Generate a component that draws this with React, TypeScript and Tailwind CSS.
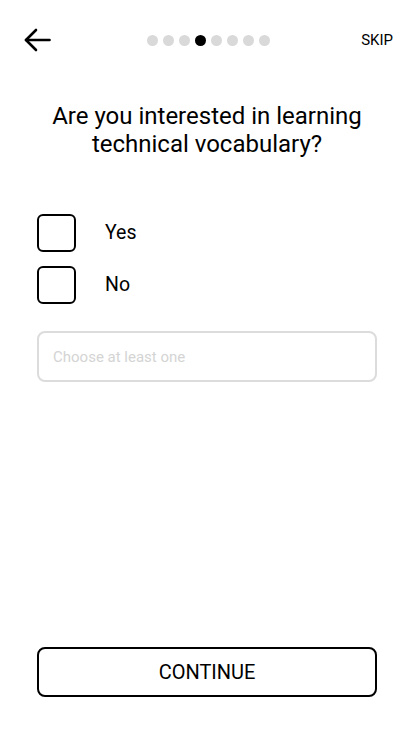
import { useState } from "react";

const Checkbox = ({ label }: { label: string }) => {
  const [checked, setChecked] = useState(false);
  return (
    <label className="flex items-center cursor-pointer">
      <button
        type="button"
        onClick={() => setChecked(!checked)}
        className="w-[39px] h-[38px] border-2 border-black rounded-[6px] bg-white"
      />
      <span className="ml-[29px] text-[19.5px] text-black">{label}</span>
    </label>
  );
};

export default function App() {
  const dots = [0, 1, 2, 3, 4, 5, 6, 7];
  const active = 3;

  return (
    <div className="w-[414px] h-[736px] bg-white flex flex-col font-['Roboto',_sans-serif] text-black">
      {/* Header */}
      <div className="flex items-center h-[80px] pl-[24px] pr-[21px]">
        <div className="flex-1 flex">
          <button type="button" className="w-[27px] h-[27px] flex items-center justify-center">
            <svg width="27" height="24" viewBox="0 0 27 24" fill="none" stroke="black" strokeWidth="2.6" strokeLinecap="round" strokeLinejoin="round">
              <path d="M25.5 12H2" />
              <path d="M12 2L2 12l10 10" />
            </svg>
          </button>
        </div>
        <div className="flex items-center gap-[5px]">
          {dots.map((d) => (
            <span
              key={d}
              className={d === active ? "w-[11px] h-[11px] rounded-full bg-black" : "w-[11px] h-[11px] rounded-full bg-[#d9d9d9]"}
            />
          ))}
        </div>
        <div className="flex-1 flex justify-end">
          <button type="button" className="text-[15px] text-black">SKIP</button>
        </div>
      </div>

      {/* Question */}
      <h1 className="mt-[22px] text-center text-[24px] leading-[28px] px-[30px]">
        Are you interested in learning technical vocabulary?
      </h1>

      {/* Options */}
      <div className="mt-[56px] pl-[37px] flex flex-col gap-[14px]">
        <Checkbox label="Yes" />
        <Checkbox label="No" />
      </div>

      {/* Input */}
      <div className="mt-[27px] px-[37px]">
        <input
          type="text"
          placeholder="Choose at least one"
          className="w-[340px] h-[51px] border-2 border-[#dcdcdc] rounded-[8px] px-[14px] text-[15px] placeholder:text-[#d4d4d4] outline-none"
        />
      </div>

      <div className="flex-1" />

      {/* Continue */}
      <div className="px-[37px] pb-[39px]">
        <button
          type="button"
          className="w-[340px] h-[50px] border-2 border-black rounded-[8px] text-[20px] text-black bg-white"
        >
          CONTINUE
        </button>
      </div>
    </div>
  );
}
